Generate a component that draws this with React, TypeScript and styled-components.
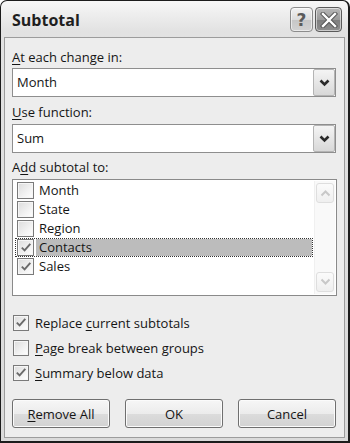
import React from 'react'
import styled, { createGlobalStyle } from 'styled-components'

const Global = createGlobalStyle`
  html, body { margin: 0; padding: 0; background: #fff; }
  body { font-family: "Open Sans", "Noto Sans", sans-serif; font-size: 13px; color: #151515; }
  * { box-sizing: border-box; }
`

const Window = styled.div`
  width: 350px;
  height: 443px;
  border: 1px solid #1c1c1c;
  border-right-width: 2px;
  border-bottom-width: 2px;
  border-radius: 7px 7px 0 0;
  background: linear-gradient(to bottom, #f7f7f7 0px, #e2e2e2 30px, #dadada 100%);
  padding: 0 3px 3px 3px;
  display: flex;
  flex-direction: column;
`

const TitleBar = styled.div`
  height: 36px;
  display: flex;
  align-items: flex-start;
  justify-content: space-between;
  padding: 0 3px 0 8px;
`

const Title = styled.div`
  font-weight: 700;
  font-size: 16px;
  line-height: 20px;
  margin-top: 9px;
  color: #1f1f1f;
`

const Caption = styled.div`
  display: flex;
  gap: 2px;
  margin-top: 6px;
`

const CapBtn = styled.div<{ $dark?: boolean; $w: number }>`
  width: ${({ $w }) => $w}px;
  height: 25px;
  border: 1px solid ${({ $dark }) => ($dark ? '#5a5a5a' : '#8c8c8c')};
  border-radius: 4px;
  background: ${({ $dark }) =>
    $dark
      ? 'linear-gradient(to bottom, #b8b8b8 0%, #9a9a9a 50%, #7e7e7e 51%, #8e8e8e 100%)'
      : 'linear-gradient(to bottom, #f2f2f2 0%, #dcdcdc 50%, #c6c6c6 51%, #d2d2d2 100%)'};
  box-shadow: inset 0 0 0 1px rgba(255, 255, 255, 0.55);
  display: flex;
  align-items: center;
  justify-content: center;
  color: #5a5a5a;
  font-size: 17px;
  font-weight: 700;
  font-family: "DejaVu Sans", sans-serif;
`

const Client = styled.div`
  flex: 1;
  border: 1px solid #9c9c9c;
  background: #ededed;
  padding: 11px 7px 0 7px;
  display: flex;
  flex-direction: column;
`

const Label = styled.div<{ $mt?: number }>`
  line-height: 16px;
  margin-top: ${({ $mt }) => $mt ?? 0}px;
`

const Key = styled.span`
  text-decoration: underline;
  text-underline-offset: 2px;
`

const Combo = styled.div<{ $mt: number }>`
  margin-top: ${({ $mt }) => $mt}px;
  height: 29px;
  width: 324px;
  border: 1px solid #8e8e8e;
  background: #fff;
  display: flex;
  align-items: stretch;
`

const ComboText = styled.div`
  flex: 1;
  padding-left: 4px;
  line-height: 27px;
`

const DropBtn = styled.div`
  width: 22px;
  border: 1px solid #b4b4b4;
  border-radius: 2px;
  background: linear-gradient(to bottom, #f4f4f4 0%, #e6e6e6 50%, #d8d8d8 100%);
  display: flex;
  align-items: center;
  justify-content: center;
`

const ListBox = styled.div`
  margin-top: 4px;
  width: 325px;
  height: 117px;
  border: 1px solid #8a8a8a;
  background: #fff;
  display: flex;
  padding: 1px;
`

const Items = styled.div`
  flex: 1;
  padding-left: 1px;
`

const Item = styled.div<{ $focus?: boolean }>`
  height: 19px;
  display: flex;
  align-items: center;
  outline: ${({ $focus }) => ($focus ? '1px dotted #333' : 'none')};
  outline-offset: -1px;
  padding-left: 2px;
`

const ItemText = styled.div<{ $sel?: boolean }>`
  flex: 1;
  align-self: stretch;
  padding-left: 3px;
  margin-left: 2px;
  background: ${({ $sel }) => ($sel ? '#bcbcbc' : 'transparent')};
  margin-right: ${({ $sel }) => ($sel ? '1px' : '0')};
  margin-top: ${({ $sel }) => ($sel ? '1px' : '0')};
  margin-bottom: ${({ $sel }) => ($sel ? '1px' : '0')};
  line-height: ${({ $sel }) => ($sel ? '17px' : '19px')};
`

const Box = styled.div<{ $size: number }>`
  width: ${({ $size }) => $size}px;
  height: ${({ $size }) => $size}px;
  flex: none;
  border: 1px solid #7a7a7a;
  background: linear-gradient(135deg, #dcdcdc 0%, #f2f2f2 60%, #ffffff 100%);
  box-shadow: inset 0 0 0 1px #f6f6f6;
  display: flex;
  align-items: center;
  justify-content: center;
`

const ScrollBar = styled.div`
  width: 21px;
  margin-left: 1px;
  background: #f9f9f9;
  border-left: 1px solid #f0f0f0;
  display: flex;
  flex-direction: column;
  justify-content: space-between;
  padding: 2px 1px;
`

const ScrollBtn = styled.div`
  height: 20px;
  border: 1px solid #dedede;
  border-radius: 3px;
  background: linear-gradient(to bottom, #fbfbfb, #efefef);
  display: flex;
  align-items: center;
  justify-content: center;
`

const Options = styled.div`
  margin-top: 14px;
  display: flex;
  flex-direction: column;
`

const Option = styled.div`
  height: 25px;
  display: flex;
  align-items: center;
  gap: 6px;
  padding-left: 1px;
  line-height: 16px;
`

const Buttons = styled.div`
  margin-top: 14px;
  display: flex;
  gap: 15px;
`

const Button = styled.div`
  width: 98px;
  height: 29px;
  border: 1px solid #6f6f6f;
  border-radius: 3px;
  background: linear-gradient(to bottom, #f6f6f6 0%, #ececec 50%, #dcdcdc 51%, #d2d2d2 100%);
  box-shadow: inset 0 0 0 1px #fbfbfb;
  display: flex;
  align-items: center;
  justify-content: center;
  line-height: 16px;
`

const Chevron = ({ up, pale }: { up?: boolean; pale?: boolean }) => (
  <svg width="11" height="8" viewBox="0 0 11 8">
    <path
      d={up ? 'M1.5 6.5 L5.5 2.5 L9.5 6.5' : 'M1.5 1.5 L5.5 5.5 L9.5 1.5'}
      fill="none"
      stroke={pale ? '#c8c8c8' : '#2a2a2a'}
      strokeWidth={pale ? 2 : 2.6}
    />
  </svg>
)

const Tick = () => (
  <svg width="12" height="11" viewBox="0 0 12 11">
    <path d="M1.8 5.6 L4.6 8.4 L10.3 1.8" fill="none" stroke="#6a6a6a" strokeWidth="1.9" />
  </svg>
)

const CloseX = () => (
  <svg width="18" height="16" viewBox="0 0 18 16">
    <path d="M3 2 L15 14 M15 2 L3 14" stroke="#555" strokeWidth="4.4" strokeLinecap="square" />
    <path d="M3 2 L15 14 M15 2 L3 14" stroke="#fff" strokeWidth="2.4" strokeLinecap="square" />
  </svg>
)

const fields = [
  { name: 'Month', checked: false },
  { name: 'State', checked: false },
  { name: 'Region', checked: false },
  { name: 'Contacts', checked: true, selected: true },
  { name: 'Sales', checked: true },
]

export default function App() {
  return (
    <>
      <Global />
      <Window>
        <TitleBar>
          <Title>Subtotal</Title>
          <Caption>
            <CapBtn $w={23}>?</CapBtn>
            <CapBtn $w={27} $dark>
              <CloseX />
            </CapBtn>
          </Caption>
        </TitleBar>
        <Client>
          <Label>
            <Key>A</Key>t each change in:
          </Label>
          <Combo $mt={3}>
            <ComboText>Month</ComboText>
            <DropBtn>
              <Chevron />
            </DropBtn>
          </Combo>
          <Label $mt={7}>
            <Key>U</Key>se function:
          </Label>
          <Combo $mt={4}>
            <ComboText>Sum</ComboText>
            <DropBtn>
              <Chevron />
            </DropBtn>
          </Combo>
          <Label $mt={6}>
            A<Key>d</Key>d subtotal to:
          </Label>
          <ListBox>
            <Items>
              {fields.map((f) => (
                <Item key={f.name} $focus={f.selected}>
                  <Box $size={17}>{f.checked && <Tick />}</Box>
                  <ItemText $sel={f.selected}>{f.name}</ItemText>
                </Item>
              ))}
            </Items>
            <ScrollBar>
              <ScrollBtn>
                <Chevron up pale />
              </ScrollBtn>
              <ScrollBtn>
                <Chevron pale />
              </ScrollBtn>
            </ScrollBar>
          </ListBox>
          <Options>
            <Option>
              <Box $size={16}>
                <Tick />
              </Box>
              <span>
                Replace <Key>c</Key>urrent subtotals
              </span>
            </Option>
            <Option>
              <Box $size={16} />
              <span>
                <Key>P</Key>age break between groups
              </span>
            </Option>
            <Option>
              <Box $size={16}>
                <Tick />
              </Box>
              <span>
                <Key>S</Key>ummary below data
              </span>
            </Option>
          </Options>
          <Buttons>
            <Button>
              <span>
                <Key>R</Key>emove All
              </span>
            </Button>
            <Button>OK</Button>
            <Button>Cancel</Button>
          </Buttons>
        </Client>
      </Window>
    </>
  )
}
